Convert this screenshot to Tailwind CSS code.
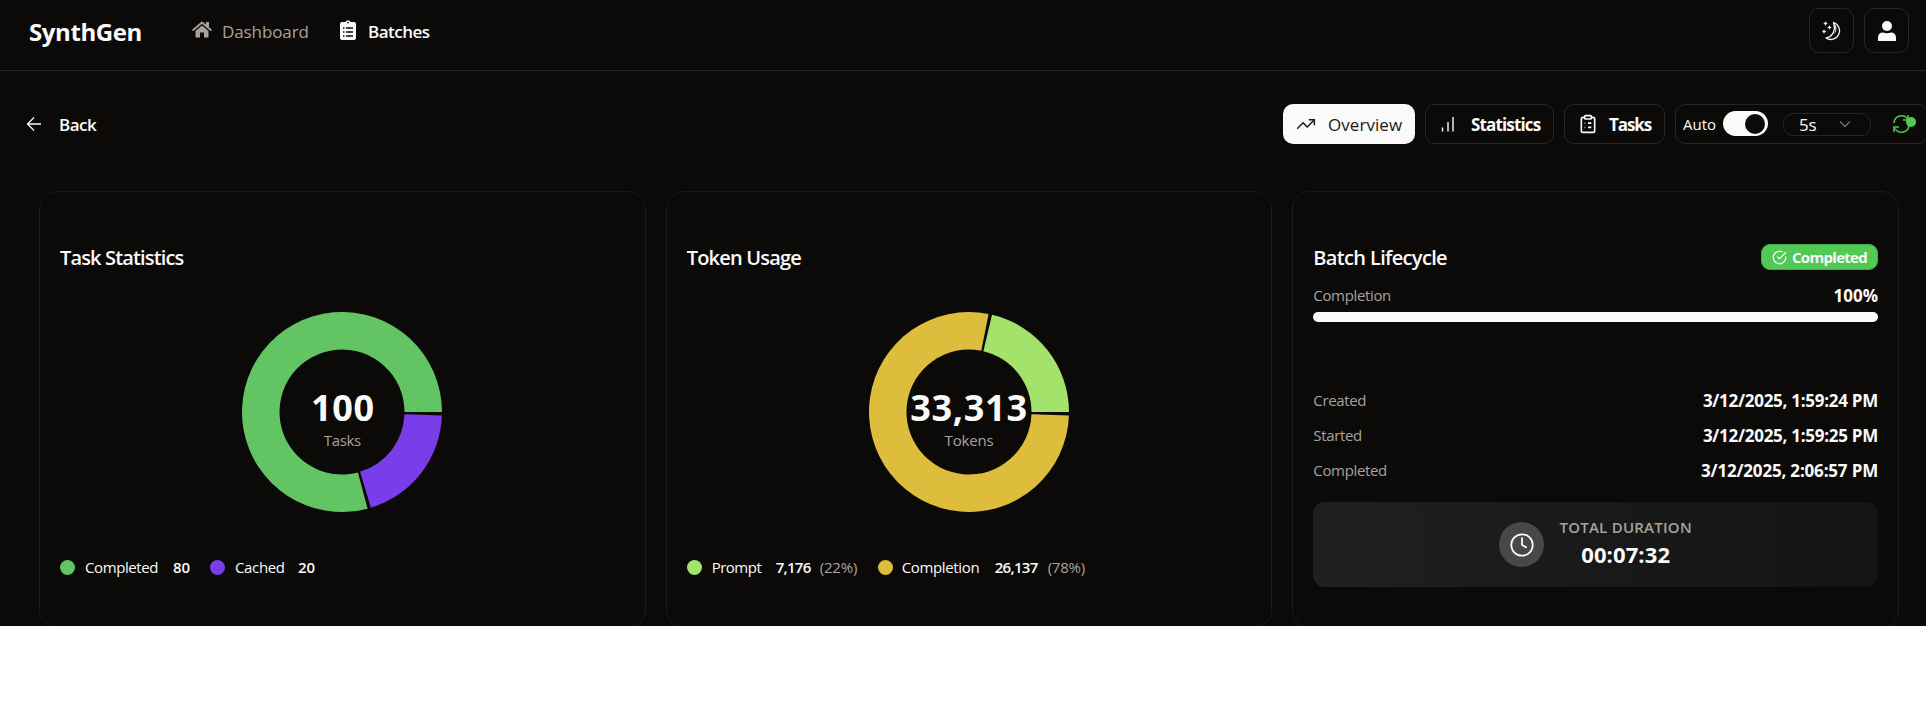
<!DOCTYPE html>
<html lang="en">
<head>
<meta charset="utf-8">
<title>SynthGen</title>
<script src="https://cdn.jsdelivr.net/npm/@tailwindcss/browser@4"></script>
</head>
<body class="w-[1926px] h-[714px] overflow-hidden bg-white font-['Open_Sans','Noto_Sans',sans-serif] text-[#fafaf9]">
<div class="h-[626px] overflow-hidden bg-[#0c0a09]">
  <header class="flex h-[71px] items-start border-b border-[#292524] pl-[29px] pr-[17px]">
    <div class="mt-[15px] w-[163px] text-2xl font-bold leading-[34px] tracking-[-0.4px] whitespace-nowrap">SynthGen</div>
    <nav class="mt-[20px] flex items-center text-[17px] leading-6 whitespace-nowrap">
      <svg class="h-[18px] w-5 -mt-1" viewBox="0 0 20 18" fill="none"><path stroke="#a8a29e" stroke-width="1.9" stroke-linecap="round" stroke-linejoin="round" d="M1.200 9 10 1.600 18.800 9"/><path fill="#a8a29e" d="M14 1h3v6l-3-2.500ZM10 4.500 16.500 10v6.500H12v-5H8v5H3.500V10Z"/></svg>
      <span class="ml-[10px] w-[118px] font-medium tracking-[-0.1px] text-[#a8a29e]">Dashboard</span>
      <svg class="h-5 w-4 -mt-1" viewBox="0 0 16 20"><path fill="#fafaf9" d="M2 2h3.600a2.500 2.500 0 0 1 4.800 0H14a2 2 0 0 1 2 2v14a2 2 0 0 1-2 2H2a2 2 0 0 1-2-2V4a2 2 0 0 1 2-2Z"/><circle cx="8" cy="2.600" r=".9" fill="#0c0a09"/><path stroke="#0c0a09" stroke-width="1.300" d="M3 8h1.500M6 8h7M3 12h1.500M6 12h7M3 16h1.500M6 16h7"/></svg>
      <span class="ml-3 font-semibold tracking-[-0.5px]">Batches</span>
    </nav>
    <div class="ml-auto mt-2 flex gap-2.5">
      <div class="flex size-[45px] items-center justify-center rounded-[10px] border border-[#292524]"><svg class="size-5" viewBox="0 0 20 20" fill="none"><path stroke="#fafaf9" stroke-width="1.300" stroke-linejoin="round" d="M11.500 1.500a8.700 8.700 0 1 1-7.500 15.500C11 15.500 14 9 11.500 1.500Z"/><path fill="#fafaf9" d="M12 2c5 5 2 13-7 15 8-1 10-8 7-15ZM3.500.3l.8 1.400 1.400.8-1.400.8-.8 1.400-.8-1.400-1.400-.8 1.400-.8ZM7.500 4.300l.8 1.400 1.400.8-1.400.8-.8 1.400-.8-1.400-1.400-.8 1.400-.8ZM2 8.300l.8 1.400 1.400.8-1.400.8L2 12.700l-.8-1.400-1.400-.8 1.400-.8Z"/></svg></div>
      <div class="flex size-[45px] items-center justify-center rounded-[10px] border border-[#292524]"><svg class="h-5 w-[18px]" viewBox="0 0 18 20" fill="#fafaf9"><circle cx="9" cy="5" r="5"/><path d="M0 20v-3q0-5.500 5-5.500 4 1.500 8 0 5 0 5 5.500v3Z"/></svg></div>
    </div>
  </header>
  <div class="mt-[33px] flex h-10 items-center pl-[26px] text-[17px] leading-6 whitespace-nowrap">
    <svg class="size-4" viewBox="0 0 16 16" fill="none" stroke="#fafaf9" stroke-width="1.300"><path d="M15 8H1.500M8 1.500 1.500 8 8 14.500"/></svg>
    <span class="ml-[17px] pt-px font-semibold tracking-[-0.5px]">Back</span>
    <div class="ml-auto -mr-[2px] flex h-10 gap-2.5">
      <div class="flex h-10 w-[132px] items-center rounded-[10px] bg-[#fafaf9] pl-[13px] text-[#1c1917]"><svg class="size-5" viewBox="0 0 24 24" fill="none" stroke="currentColor" stroke-width="1.800" stroke-linecap="round" stroke-linejoin="round"><path d="m22 7-8.500 8.500-5-5L2 17"/><path d="M16 7h6v6"/></svg><span class="ml-[12px] pt-px font-medium tracking-[0.05px]">Overview</span></div>
      <div class="flex h-10 w-[129px] items-center rounded-[10px] border border-[#292524] pl-3"><svg class="size-5" viewBox="0 0 20 20" fill="none" stroke="#fafaf9" stroke-width="1.400"><path d="M4.500 17.500v-4M10 17.500V8M15 17.500V3"/></svg><span class="ml-[13px] pt-px font-bold tracking-[-0.850px]">Statistics</span></div>
      <div class="flex h-10 w-[101px] items-center rounded-[10px] border border-[#292524] pl-[13px]"><svg class="size-5" viewBox="0 0 24 24" fill="none" stroke="#fafaf9" stroke-width="2"><rect x="8" y="2" width="8" height="4" rx="1"/><path d="M16 4h2a2 2 0 0 1 2 2v14a2 2 0 0 1-2 2H6a2 2 0 0 1-2-2V6a2 2 0 0 1 2-2h2M12 11h4M12 16h4M8 11h.8M8 16h.8"/></svg><span class="ml-[11px] pt-px font-bold tracking-[-1.100px]">Tasks</span></div>
      <div class="flex h-10 w-[253px] items-center rounded-[10px] border border-[#292524] pl-[7px]">
        <span class="w-8 text-[15px]">Auto</span>
        <div class="ml-2 -mt-px flex h-[25px] w-[45px] items-center justify-end rounded-full bg-[#fafaf9] pr-[3px]"><div class="size-5 rounded-full bg-[#0c0a09]"></div></div>
        <div class="ml-[15px] flex h-[23px] w-[88px] items-center rounded-[10px] border border-[#292524] pl-[15px]"><span class="w-[17px] pt-0.5 tracking-[-0.3px]">5s</span><svg class="ml-[23px] h-2 w-3" viewBox="0 0 12 8" fill="none" stroke="#78716c" stroke-width="1.300"><path d="m1 1.500 5 5 5-5"/></svg></div>
        <svg class="ml-[21px] h-5 w-6" viewBox="0 0 24 20" fill="none" stroke="#50c955" stroke-width="1.500"><path d="M2 9a7.500 7.500 0 0 1 14-3.500M16 1v5h-5M17 11A7.500 7.500 0 0 1 3 14.500M2 18v-5h5"/><circle cx="19" cy="8" r="5" fill="#50c955" stroke="none"/></svg>
      </div>
    </div>
  </div>
  <main class="mt-[47px] ml-[39px] grid h-[437px] w-[1860px] grid-cols-3 gap-5 whitespace-nowrap">
    <section class="rounded-[18px] border border-[#1c1a19] px-5 pt-[52px]">
      <h2 class="h-[28px] text-[20px] font-semibold leading-[28px] tracking-[-0.850px]">Task Statistics</h2>
      <div class="mx-auto mt-[40px] grid size-[200px]">
        <svg class="col-start-1 row-start-1" viewBox="0 0 200 200"><path fill="#62c462" d="M200 100A100 100 0 1 0 125.540 196.680L115.970 160.430A62.500 62.500 0 1 1 162.500 100Z"/><path fill="#793dea" d="M128.900 195.730A100 100 0 0 0 199.940 103.490L162.460 102.180A62.500 62.500 0 0 1 118.060 159.830Z"/></svg>
        <div class="col-start-1 row-start-1 flex flex-col items-center pt-[74px]"><span class="pl-px text-4xl font-bold leading-[44px] tracking-[0.7px]">100</span><span class="text-[15px] leading-5 tracking-[-0.3px] text-[#a8a29e]">Tasks</span></div>
      </div>
      <div class="mt-[44px] flex h-[22px] items-center text-[15px] leading-5">
        <i class="size-[15px] rounded-full bg-[#62c462]"></i><span class="ml-2.5 w-[88px] tracking-[-0.4px]">Completed</span><b class="w-[37px] font-semibold">80</b>
        <i class="size-[15px] rounded-full bg-[#793dea]"></i><span class="ml-[10px] w-[63px] tracking-[-0.350px]">Cached</span><b class="font-semibold">20</b>
      </div>
    </section>
    <section class="rounded-[18px] border border-[#1c1a19] px-5 pt-[52px]">
      <h2 class="h-[28px] text-[20px] font-semibold leading-[28px] tracking-[-0.8px]">Token Usage</h2>
      <div class="mx-auto mt-[40px] grid size-[200px]">
        <svg class="col-start-1 row-start-1" viewBox="0 0 200 200"><path fill="#a3e36b" d="M200 100A100 100 0 0 0 123 2.680L114.380 39.180A62.500 62.500 0 0 1 162.500 100Z"/><path fill="#debd3c" d="M119.590 1.940A100 100 0 1 0 199.940 103.490L162.460 102.180A62.500 62.500 0 1 1 112.250 38.710Z"/></svg>
        <div class="col-start-1 row-start-1 flex flex-col items-center pt-[74px]"><span class="text-4xl font-bold leading-[44px] tracking-[0.7px]">33,313</span><span class="text-[15px] leading-5 tracking-[-0.2px] text-[#a8a29e]">Tokens</span></div>
      </div>
      <div class="mt-[44px] flex h-[22px] items-center text-[15px] leading-5">
        <i class="size-[15px] rounded-full bg-[#a3e36b]"></i><span class="ml-[10px] w-[64px] tracking-[-0.5px]">Prompt</span><b class="w-[44px] font-semibold tracking-[-0.7px]">7,176</b><span class="w-[58px] tracking-[-0.150px] text-[#a8a29e]">(22%)</span>
        <i class="size-[15px] rounded-full bg-[#debd3c]"></i><span class="ml-[9px] w-[93px] tracking-[-0.350px]">Completion</span><b class="w-[53px] font-semibold tracking-[-0.650px]">26,137</b><span class="tracking-[-0.250px] text-[#a8a29e]">(78%)</span>
      </div>
    </section>
    <section class="rounded-[18px] border border-[#1c1a19] px-5 pt-[52px]">
      <div class="flex h-[28px] items-center justify-between"><h2 class="text-[20px] font-semibold leading-[28px] tracking-[-0.650px]">Batch Lifecycle</h2>
        <div class="mb-0.5 flex h-[26px] w-[117px] items-center rounded-[9px] border border-[#41ad46] bg-[#50c955] pl-[10px] text-[15px] font-bold leading-5 tracking-[-0.7px]"><svg class="mr-[5px] size-[15px]" viewBox="0 0 24 24" fill="none" stroke="#fafaf9" stroke-width="2" stroke-linecap="round" stroke-linejoin="round"><path d="M22 11.100V12a10 10 0 1 1-5.900-9.100"/><path d="m9 11 3 3L22 4"/></svg>Completed</div></div>
      <div class="mt-[11px] flex h-6 items-center justify-between"><span class="text-[15px] tracking-[-0.350px] text-[#a8a29e]">Completion</span><b class="pt-px text-[17px] font-bold">100%</b></div>
      <div class="mt-[5px] h-2.5 rounded-full bg-[#fafaf9]"></div>
      <div class="mt-[61px] flex flex-col text-[15px] tracking-[-0.350px] text-[#a8a29e]">
        <div class="flex h-[35px] items-center justify-between">Created<b class="text-[17px] font-bold tracking-[-0.270px] text-[#fafaf9]">3/12/2025, 1:59:24 PM</b></div>
        <div class="flex h-[35px] items-center justify-between">Started<b class="text-[17px] font-bold tracking-[-0.270px] text-[#fafaf9]">3/12/2025, 1:59:25 PM</b></div>
        <div class="flex h-[35px] items-center justify-between">Completed<b class="text-[17px] font-bold tracking-[-0.180px] text-[#fafaf9]">3/12/2025, 2:06:57 PM</b></div>
      </div>
      <div class="mt-[14px] flex h-[85px] items-center justify-center rounded-[12px] bg-linear-to-r from-[#21201e] via-[#191919] to-[#151413]">
        <div class="flex size-[45px] items-center justify-center rounded-full bg-[#484848]"><svg class="size-7" viewBox="0 0 24 24" fill="none" stroke="#fafaf9" stroke-width="1.500" stroke-linecap="round" stroke-linejoin="round"><circle cx="12" cy="12" r="9.200"/><path d="M12 6v6l3.500 2"/></svg></div>
        <div class="-mt-[3px] ml-[15px] flex w-[133px] flex-col items-center"><span class="text-[15px] font-semibold leading-5 tracking-[0.250px] text-[#a8a29e]">TOTAL DURATION</span><span class="mt-px text-[22px] font-bold leading-[32px] tracking-[0.1px]">00:07:32</span></div>
      </div>
    </section>
  </main>
</div>
</body>
</html>
